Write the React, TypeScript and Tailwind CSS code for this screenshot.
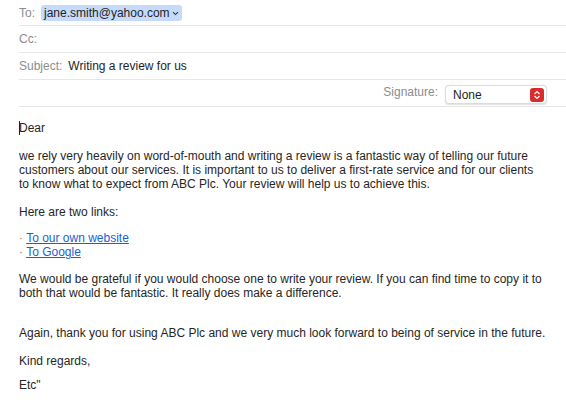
import React from 'react';

const font = { fontFamily: '"Liberation Sans", Arial, sans-serif' };

function HeaderRow({ label, children }: { label: string; children?: React.ReactNode }) {
  return (
    <div className="flex items-center h-[27px] border-b border-[#e6e6e6] text-[12px]">
      <span className="text-[#8c8c8c] mr-[6px]">{label}</span>
      {children}
    </div>
  );
}

export default function App() {
  return (
    <div className="w-[566px] h-[414px] bg-white overflow-hidden text-[#262626]" style={font}>
      {/* header fields */}
      <div className="pl-[19px]">
        <div className="flex items-center h-[26px] border-b border-[#e6e6e6] text-[12px]">
          <span className="text-[#8c8c8c] mr-[6px]">To:</span>
          <span className="flex items-center h-[16px] px-[3px] rounded-[3px] bg-[#c6dbfc] text-[#1e1e1e]">
            jane.smith@yahoo.com
            <svg width="7" height="5" viewBox="0 0 7 5" className="ml-[2px] mt-[1px]">
              <path d="M1 1.2 L3.5 3.6 L6 1.2" fill="none" stroke="#333" strokeWidth="1.1" />
            </svg>
          </span>
        </div>
        <HeaderRow label="Cc:" />
        <HeaderRow label="Subject:">
          <span className="text-[#1e1e1e]">Writing a review for us</span>
        </HeaderRow>
        <div className="flex items-end justify-end h-[27px] pb-[2px] border-b border-[#e6e6e6] text-[12px] pr-[19px]">
          <span className="text-[#8c8c8c] mr-[7px] mb-[3px]">Signature:</span>
          <div className="flex items-center justify-between w-[102px] h-[19px] rounded-[4px] border border-[#dcdcdc] bg-white shadow-[0_0.5px_1px_rgba(0,0,0,0.12)] pl-[7px] pr-[2px]">
            <span className="text-[#1e1e1e]">None</span>
            <span className="flex items-center justify-center w-[14px] h-[14px] rounded-[3px] bg-[#d92c2c]">
              <svg width="8" height="10" viewBox="0 0 8 10">
                <path d="M1.5 4 L4 1.6 L6.5 4 M1.5 6 L4 8.4 L6.5 6" fill="none" stroke="#fff" strokeWidth="1.2" />
              </svg>
            </span>
          </div>
        </div>
      </div>

      {/* body */}
      <div className="pl-[19px] pt-[14px] text-[12px] leading-[14px]">
        <p className="relative">
          <span className="absolute left-0 top-0 w-[1px] h-[14px] bg-[#222]" />
          Dear
        </p>
        <p className="mt-[14px]">
          we rely very heavily on word-of-mouth and writing a review is a fantastic way of telling our future
          <br />
          customers about our services. It is important to us to deliver a first-rate service and for our clients
          <br />
          to know what to expect from ABC Plc. Your review will help us to achieve this.
        </p>
        <p className="mt-[14px]">Here are two links:</p>
        <p className="mt-[12px]">
          <span className="text-[#888]">·</span>{' '}
          <a className="text-[#1a5fd6] underline">To our own website</a>
          <br />
          <span className="text-[#888]">·</span>{' '}
          <a className="text-[#1a5fd6] underline">To Google</a>
        </p>
        <p className="mt-[13px]">
          We would be grateful if you would choose one to write your review. If you can find time to copy it to
          <br />
          both that would be fantastic. It really does make a difference.
        </p>
        <p className="mt-[26px]">
          Again, thank you for using ABC Plc and we very much look forward to being of service in the future.
        </p>
        <p className="mt-[14px]">Kind regards,</p>
        <p className="mt-[10px]">Etc"</p>
      </div>
    </div>
  );
}
